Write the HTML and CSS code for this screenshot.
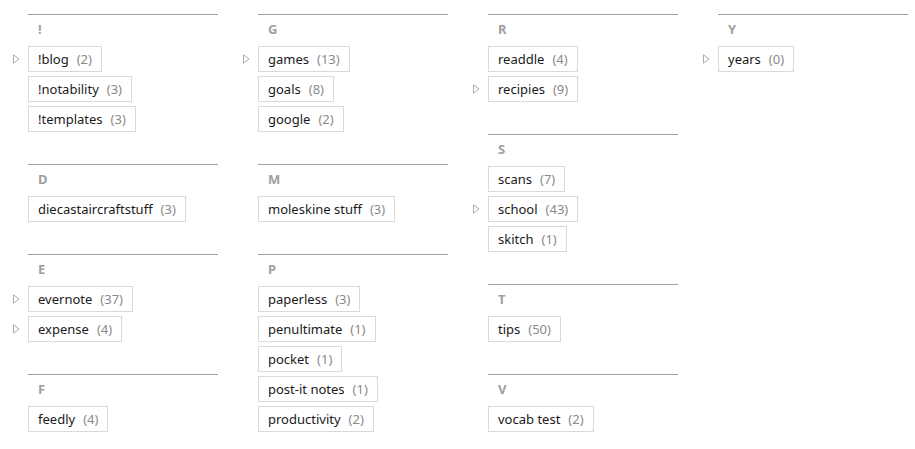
FILE: index.html
```html
<!DOCTYPE html>
<html>
<head>
<meta charset="utf-8">
<link rel="stylesheet" href="styles.css">
</head>
<body>
<div class="board">
  <div class="col">
    <section class="group">
      <h3 class="letter">!</h3>
      <ul class="tags">
        <li class="tag has-kids"><span class="name">!blog</span><span class="count">(2)</span></li>
        <li class="tag"><span class="name">!notability</span><span class="count">(3)</span></li>
        <li class="tag"><span class="name">!templates</span><span class="count">(3)</span></li>
      </ul>
    </section>
    <section class="group">
      <h3 class="letter">D</h3>
      <ul class="tags">
        <li class="tag"><span class="name">diecastaircraftstuff</span><span class="count">(3)</span></li>
      </ul>
    </section>
    <section class="group">
      <h3 class="letter">E</h3>
      <ul class="tags">
        <li class="tag has-kids"><span class="name">evernote</span><span class="count">(37)</span></li>
        <li class="tag has-kids"><span class="name">expense</span><span class="count">(4)</span></li>
      </ul>
    </section>
    <section class="group">
      <h3 class="letter">F</h3>
      <ul class="tags">
        <li class="tag"><span class="name">feedly</span><span class="count">(4)</span></li>
      </ul>
    </section>
  </div>
  <div class="col">
    <section class="group">
      <h3 class="letter">G</h3>
      <ul class="tags">
        <li class="tag has-kids"><span class="name">games</span><span class="count">(13)</span></li>
        <li class="tag"><span class="name">goals</span><span class="count">(8)</span></li>
        <li class="tag"><span class="name">google</span><span class="count">(2)</span></li>
      </ul>
    </section>
    <section class="group">
      <h3 class="letter">M</h3>
      <ul class="tags">
        <li class="tag"><span class="name">moleskine stuff</span><span class="count">(3)</span></li>
      </ul>
    </section>
    <section class="group">
      <h3 class="letter">P</h3>
      <ul class="tags">
        <li class="tag"><span class="name">paperless</span><span class="count">(3)</span></li>
        <li class="tag"><span class="name">penultimate</span><span class="count">(1)</span></li>
        <li class="tag"><span class="name">pocket</span><span class="count">(1)</span></li>
        <li class="tag"><span class="name">post-it notes</span><span class="count">(1)</span></li>
        <li class="tag"><span class="name">productivity</span><span class="count">(2)</span></li>
      </ul>
    </section>
  </div>
  <div class="col">
    <section class="group">
      <h3 class="letter">R</h3>
      <ul class="tags">
        <li class="tag"><span class="name">readdle</span><span class="count">(4)</span></li>
        <li class="tag has-kids"><span class="name">recipies</span><span class="count">(9)</span></li>
      </ul>
    </section>
    <section class="group">
      <h3 class="letter">S</h3>
      <ul class="tags">
        <li class="tag"><span class="name">scans</span><span class="count">(7)</span></li>
        <li class="tag has-kids"><span class="name">school</span><span class="count">(43)</span></li>
        <li class="tag"><span class="name">skitch</span><span class="count">(1)</span></li>
      </ul>
    </section>
    <section class="group">
      <h3 class="letter">T</h3>
      <ul class="tags">
        <li class="tag"><span class="name">tips</span><span class="count">(50)</span></li>
      </ul>
    </section>
    <section class="group">
      <h3 class="letter">V</h3>
      <ul class="tags">
        <li class="tag"><span class="name">vocab test</span><span class="count">(2)</span></li>
      </ul>
    </section>
  </div>
  <div class="col">
    <section class="group">
      <h3 class="letter">Y</h3>
      <ul class="tags">
        <li class="tag has-kids"><span class="name">years</span><span class="count">(0)</span></li>
      </ul>
    </section>
  </div>
</div>
</body>
</html>
```
FILE: styles.css
```css
html, body {
  margin: 0;
  padding: 0;
  background: #fff;
}
body {
  font-family: "Noto Sans", "Open Sans", sans-serif;
  font-size: 13px;
  color: #1a1a1a;
}
.board {
  display: flex;
  align-items: flex-start;
  gap: 40px;
  padding: 14px 0 0 28px;
}
.col {
  width: 190px;
  display: flex;
  flex-direction: column;
}
.group {
  border-top: 1px solid #a0a0a0;
  padding-bottom: 32px;
}
.letter {
  margin: 0;
  height: 31px;
  line-height: 29px;
  padding-left: 10px;
  font-size: 13px;
  font-weight: bold;
  color: #a0a0a0;
}
.tags {
  list-style: none;
  margin: 0;
  padding: 0;
  display: flex;
  flex-direction: column;
  align-items: flex-start;
  gap: 4px;
}
.tag {
  position: relative;
  display: flex;
  align-items: center;
  box-sizing: border-box;
  height: 26px;
  padding: 0 9px;
  border: 1px solid #d9d9d9;
  white-space: nowrap;
}
.count {
  margin-left: 8px;
  color: #8a8a8a;
}
.tag.has-kids::before {
  content: "";
  position: absolute;
  left: -16px;
  top: 7px;
  width: 7px;
  height: 10px;
  background: url("data:image/svg+xml;utf8,<svg xmlns='http://www.w3.org/2000/svg' width='7' height='10' viewBox='0 0 7 10'><path d='M0.5 0.8 L6 5 L0.5 9.2 Z' fill='none' stroke='%23aaaaaa' stroke-width='1'/></svg>") no-repeat;
}
```
